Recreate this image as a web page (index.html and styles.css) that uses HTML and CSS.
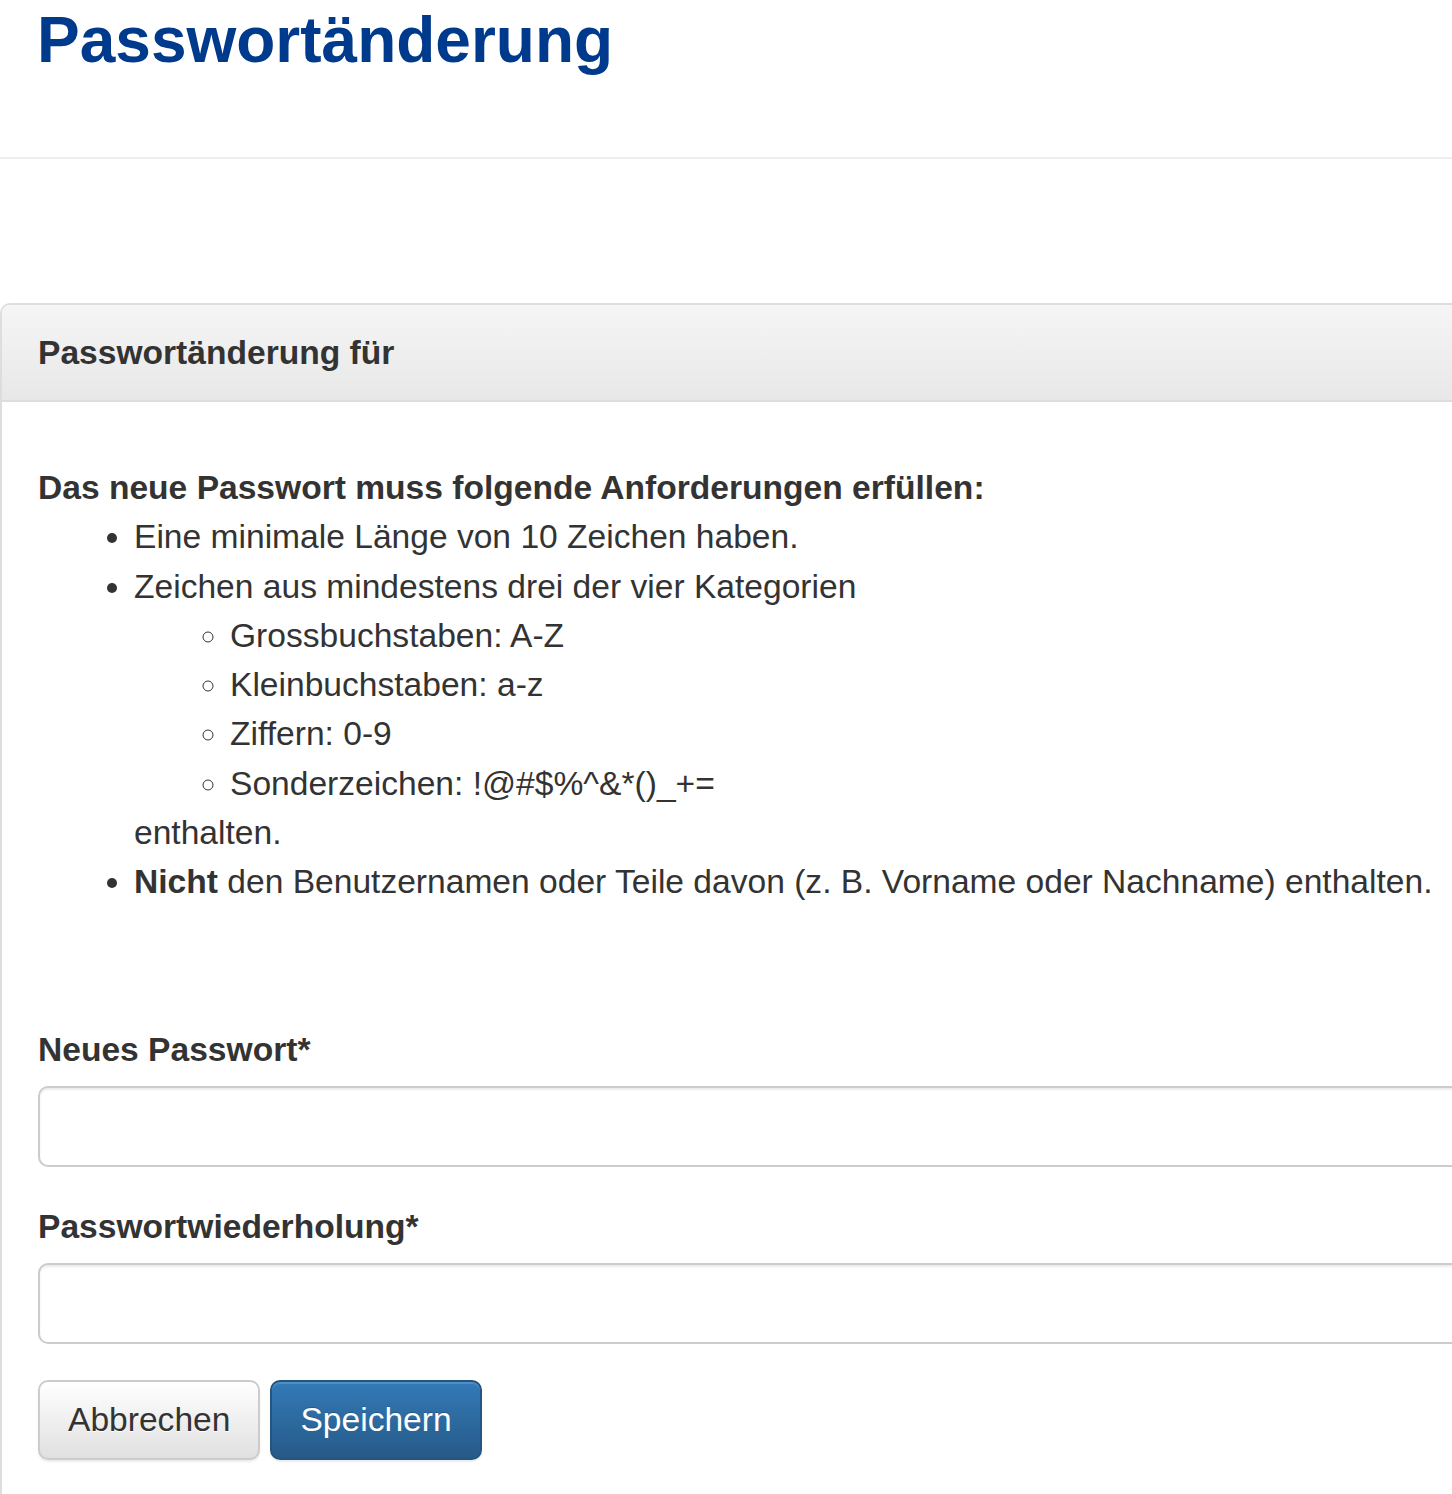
FILE: index.html
```html
<!DOCTYPE html>
<html lang="de">
<head>
<meta charset="utf-8">
<title>Passwortänderung</title>
<link rel="stylesheet" href="styles.css">
</head>
<body>
<div class="page">
  <header class="page-header">
    <h1 class="page-title">Passwortänderung</h1>
  </header>
  <hr class="divider">
  <section class="panel">
    <div class="panel-heading">
      <h3 class="panel-title">Passwortänderung für <span class="redacted"></span></h3>
    </div>
    <div class="panel-body">
      <div class="requirements">
        <strong>Das neue Passwort muss folgende Anforderungen erfüllen:</strong>
        <ul class="req-list">
          <li>Eine minimale Länge von 10 Zeichen haben.</li>
          <li>Zeichen aus mindestens drei der vier Kategorien
            <ul class="req-sub">
              <li>Grossbuchstaben: A-Z</li>
              <li>Kleinbuchstaben: a-z</li>
              <li>Ziffern: 0-9</li>
              <li>Sonderzeichen: !@#$%^&amp;*()_+=</li>
            </ul>
            enthalten.
          </li>
          <li><strong>Nicht</strong> den Benutzernamen oder Teile davon (z. B. Vorname oder Nachname) enthalten.</li>
        </ul>
      </div>
      <form class="pw-form">
        <div class="form-group">
          <label class="form-label" for="pw1">Neues Passwort*</label>
          <input class="form-control" id="pw1" type="password">
        </div>
        <div class="form-group">
          <label class="form-label" for="pw2">Passwortwiederholung*</label>
          <input class="form-control" id="pw2" type="password">
        </div>
        <div class="actions">
          <button type="button" class="btn btn-default">Abbrechen</button>
          <button type="button" class="btn btn-primary">Speichern</button>
        </div>
      </form>
    </div>
  </section>
</div>
</body>
</html>
```
FILE: styles.css
```css
html, body {
  margin: 0;
  padding: 0;
  overflow: hidden;
  background: #fff;
}
body {
  font-family: "Liberation Sans", Arial, Helvetica, sans-serif;
  font-size: 33.6px;
  line-height: 49.3px;
  color: #333;
}
.page {
  width: 1700px;
}
.page-header {
  padding: 5px 37px 0;
  height: 148px;
  box-sizing: border-box;
}
.page-title {
  margin: 0;
  font-size: 64px;
  line-height: 70px;
  font-weight: bold;
  color: #003a8c;
}
.divider {
  margin: 0;
  border: 0;
  border-top: 2px solid #eee;
  margin-top: 9px;
}
.panel {
  margin-top: 144px;
  border: 2px solid #ddd;
  border-radius: 10px 10px 0 0;
  background: #fff;
}
.panel-heading {
  padding: 24px 36px;
  background: linear-gradient(to bottom, #f5f5f5 0%, #e8e8e8 100%);
  border-bottom: 2px solid #ddd;
  border-radius: 8px 8px 0 0;
}
.panel-title {
  margin: 0;
  font-size: 33.6px;
  line-height: 47px;
  font-weight: bold;
  color: #333;
}
.redacted {
  display: inline-block;
  width: 0;
}
.panel-body {
  padding: 61px 36px 40px;
}
.requirements strong {
  font-weight: bold;
}
.req-list {
  margin: 0;
  padding-left: 96px;
  list-style: disc;
}
.req-sub {
  margin: 0;
  padding-left: 96px;
  list-style: circle;
}
.pw-form {
  margin-top: 119px;
}
.form-group {
  margin-bottom: 36px;
}
.form-label {
  display: block;
  font-weight: bold;
  margin-bottom: 12px;
  line-height: 48px;
}
.form-control {
  display: block;
  width: 100%;
  height: 81px;
  box-sizing: border-box;
  border: 2px solid #ccc;
  border-radius: 10px;
  box-shadow: inset 0 2px 2px rgba(0,0,0,.075);
  padding: 14px 29px;
  font-size: 33.6px;
  background: #fff;
}
.actions {
  display: flex;
  gap: 10px;
  margin-top: 4px;
}
.btn {
  font-family: inherit;
  font-size: 33.6px;
  line-height: 48px;
  padding: 14px 28px;
  border-radius: 10px;
  border: 2px solid;
  cursor: pointer;
}
.btn-default {
  color: #333;
  text-shadow: 0 1px 0 #fff;
  background: linear-gradient(to bottom, #fff 0%, #e0e0e0 100%);
  border-color: #ccc;
  box-shadow: inset 0 2px 0 rgba(255,255,255,.15), 0 2px 2px rgba(0,0,0,.075);
}
.btn-primary {
  color: #fff;
  text-shadow: 0 -1px 0 rgba(0,0,0,.2);
  background: linear-gradient(to bottom, #337ab7 0%, #265a88 100%);
  border-color: #245580;
  box-shadow: inset 0 2px 0 rgba(255,255,255,.15), 0 2px 2px rgba(0,0,0,.075);
}
```
